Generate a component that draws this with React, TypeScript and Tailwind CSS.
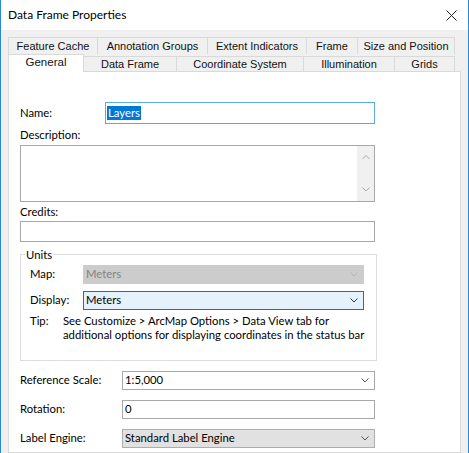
import React from "react";

const row1 = [
  { label: "Feature Cache", w: "w-[90px]" },
  { label: "Annotation Groups", w: "w-[110px]" },
  { label: "Extent Indicators", w: "w-[99px]" },
  { label: "Frame", w: "w-[51px]" },
  { label: "Size and Position", w: "w-[97px]" },
];

const row2 = [
  { label: "Data Frame", w: "w-[93px]" },
  { label: "Coordinate System", w: "w-[127px]" },
  { label: "Illumination", w: "w-[91px]" },
  { label: "Grids", w: "w-[60px]" },
];

const Chevron = ({ color = "#606060", up = false }: { color?: string; up?: boolean }) => (
  <svg width="8" height="5" viewBox="0 0 8 5" className="shrink-0">
    <polyline
      points={up ? "0.5,4 4,0.5 7.5,4" : "0.5,0.5 4,4 7.5,0.5"}
      fill="none"
      stroke={color}
      strokeWidth="1"
    />
  </svg>
);

interface ComboProps {
  value: string;
  className: string;
  textClass?: string;
  chevron?: string;
}

const Combo: React.FC<ComboProps> = ({ value, className, textClass = "text-black", chevron }) => (
  <div className={`flex items-center justify-between border pl-[2px] pr-[5px] ${className}`}>
    <span className={textClass}>{value}</span>
    <Chevron color={chevron} />
  </div>
);

export default function App() {
  return (
    <div
      className="w-[469px] h-[453px] overflow-hidden border-x border-[#2b88d8] bg-[#f0f0f0] flex flex-col text-[11.3px] text-black"
      style={{ fontFamily: "Lato, 'Liberation Sans', sans-serif" }}
    >
      {/* Title bar */}
      <div className="h-[30px] shrink-0 bg-white flex items-center justify-between pl-[7px] pr-[11px]">
        <span className="text-[12px]">Data Frame Properties</span>
        <svg width="11" height="11" viewBox="0 0 11 11">
          <line x1="0.5" y1="0.5" x2="10.5" y2="10.5" stroke="#222" strokeWidth="1" />
          <line x1="10.5" y1="0.5" x2="0.5" y2="10.5" stroke="#222" strokeWidth="1" />
        </svg>
      </div>

      <div className="flex-1 flex flex-col px-[7px] pt-[7px]">
        {/* Tabs */}
        <div
          className="flex flex-col text-[11px] text-[#111]"
          style={{ fontFamily: "'Liberation Sans', Arial, sans-serif" }}
        >
          <div className="flex h-[17px]">
            {row1.map((t, i) => (
              <div
                key={t.label}
                className={`${t.w} flex items-center justify-center border-t border-r border-[#d9d9d9] ${i === 0 ? "border-l" : ""}`}
              >
                {t.label}
              </div>
            ))}
          </div>
          <div className="flex h-[17px] items-end">
            <div className="w-[76px] h-[18px] -mb-[1px] relative z-10 bg-white border-x border-t border-[#d9d9d9] flex items-center justify-center pb-[2px] text-[11.5px]">
              General
            </div>
            {row2.map((t) => (
              <div
                key={t.label}
                className={`${t.w} h-[15px] flex items-center justify-center border-t border-r border-[#d9d9d9]`}
              >
                {t.label}
              </div>
            ))}
          </div>
        </div>

        {/* Panel */}
        <div className="flex-1 bg-white border border-[#d9d9d9] pl-[11px] pt-[30px]">
          {/* Name */}
          <div className="flex items-center h-[22px]">
            <span className="w-[85px]">Name:</span>
            <div className="w-[270px] h-[22px] border border-[#5ea6e8] flex items-center pl-[1px]">
              <span className="bg-[#0078d7] text-white leading-[14px] px-[1px]">Layers</span>
            </div>
          </div>

          {/* Description */}
          <div className="h-[21px] leading-[21px]">Description:</div>
          <div className="w-[355px] h-[57px] border border-[#a8a8a8] flex justify-end">
            <div className="w-[17px] h-full bg-[#f0f0f0] flex flex-col items-center justify-between py-[9px]">
              <Chevron color="#a8a8a8" up />
              <Chevron color="#a8a8a8" />
            </div>
          </div>

          {/* Credits */}
          <div className="h-[19px] leading-[19px]">Credits:</div>
          <div className="w-[355px] h-[21px] border border-[#a8a8a8]" />

          {/* Units */}
          <fieldset className="w-[357px] mt-[5px] border border-[#dcdcdc] pl-[9px] pb-[18px]">
            <legend className="ml-[-5px] px-[1px] leading-[15px]">Units</legend>
            <div className="flex items-center mt-[3px]">
              <span className="w-[53px]">Map:</span>
              <Combo
                value="Meters"
                className="w-[281px] h-[19px] bg-[#cccccc] border-[#cccccc]"
                textClass="text-[#838383]"
                chevron="#b4b4b4"
              />
            </div>
            <div className="flex items-center mt-[7px]">
              <span className="w-[53px]">Display:</span>
              <Combo
                value="Meters"
                className="w-[281px] h-[19px] bg-[#e5f1fb] border-[#0078d7]"
                chevron="#333"
              />
            </div>
            <div className="flex mt-[4px] leading-[14px] whitespace-nowrap">
              <span className="w-[33px]">Tip:</span>
              <div className="flex flex-col">
                <span>See Customize &gt; ArcMap Options &gt; Data View tab for</span>
                <span>additional options for displaying coordinates in the status bar</span>
              </div>
            </div>
          </fieldset>

          {/* Bottom rows */}
          <div className="flex items-center mt-[10px]">
            <span className="w-[102px]">Reference Scale:</span>
            <Combo
              value="1:5,000"
              className="w-[253px] h-[19px] bg-white border-[#a8a8a8]"
              chevron="#555"
            />
          </div>
          <div className="flex items-center mt-[10px]">
            <span className="w-[102px]">Rotation:</span>
            <div className="w-[253px] h-[19px] border border-[#a8a8a8] flex items-center pl-[2px]">0</div>
          </div>
          <div className="flex items-center mt-[10px]">
            <span className="w-[102px]">Label Engine:</span>
            <Combo
              value="Standard Label Engine"
              className="w-[253px] h-[19px] bg-[#e1e1e1] border-[#adadad]"
              chevron="#555"
            />
          </div>
        </div>
      </div>
    </div>
  );
}
